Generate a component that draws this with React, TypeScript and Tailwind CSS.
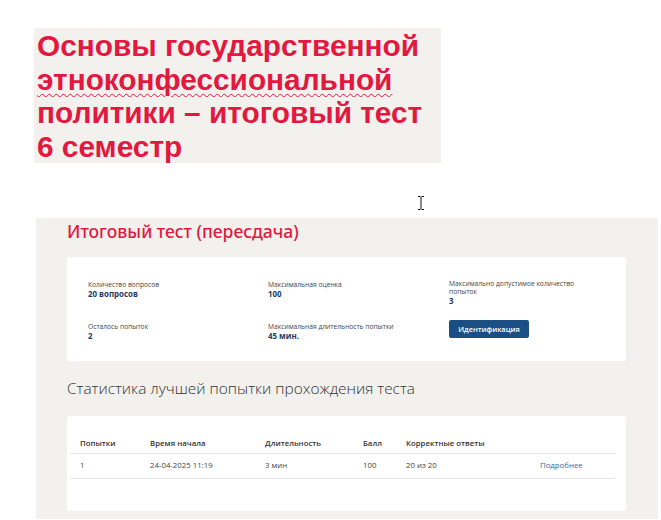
import React from "react";

export default function App() {
  return (
    <div className="relative w-[661px] h-[520px] bg-white overflow-hidden" style={{ fontFamily: '"Open Sans", "Noto Sans", sans-serif' }}>
      <div className="ml-[34px] mt-[28px] w-[407px] h-[135px] bg-[#f2f1ee] pl-[3px] pt-[1px]">
        <div className="text-[29.8px] leading-[33.5px] font-bold text-[#e3183f]" style={{ fontFamily: '"Liberation Sans", Arial, sans-serif' }}>
          <div>Основы государственной</div>
          <div><span className="underline decoration-wavy decoration-[#e3183f] decoration-1 underline-offset-[3px]">этноконфессиональной</span></div>
          <div>политики – итоговый тест</div>
          <div>6 семестр</div>
        </div>
      </div>

      <div className="absolute left-[416px] top-[195px]">
        <svg width="10" height="16" viewBox="0 0 10 16">
          <path d="M2 1.5h2.5M5.5 1.5h2.5M5 2v12M2 14.5h2.5M5.5 14.5h2.5" stroke="#111" strokeWidth="1" fill="none" />
        </svg>
      </div>

      <div className="ml-[36px] mt-[55px] w-[622px] h-[301px] bg-[#f2f1ee] pl-[31px] pr-[32px]">
        <div className="pt-[1px] text-[17.5px] leading-[24px] font-medium text-[#e3183f]" style={{ fontFamily: '"Noto Sans", sans-serif' }}>
          Итоговый тест (пересдача)
        </div>
        <div className="mt-[14px] bg-white rounded-[3px] h-[104px] pl-[21px] pt-[23px]">
          <div className="grid grid-cols-[180px_181px_160px]">
            <div>
              <div className="text-[6.7px] leading-[9px] text-[#444]">Количество вопросов</div>
              <div className="text-[7.9px] leading-[10px] font-bold text-[#1f3a60]">20 вопросов</div>
            </div>
            <div>
              <div className="text-[6.7px] leading-[9px] text-[#444]">Максимальная оценка</div>
              <div className="text-[7.9px] leading-[10px] font-bold text-[#1f3a60]">100</div>
            </div>
            <div>
              <div className="text-[6.7px] leading-[8px] text-[#444]">Максимально допустимое количество<br />попыток</div>
              <div className="text-[7.9px] leading-[10px] font-bold text-[#1f3a60]">3</div>
            </div>
            <div className="mt-[16px]">
              <div className="text-[6.7px] leading-[9px] text-[#444]">Осталось попыток</div>
              <div className="text-[7.9px] leading-[10px] font-bold text-[#1f3a60]">2</div>
            </div>
            <div className="mt-[16px]">
              <div className="text-[6.7px] leading-[9px] text-[#444]">Максимальная длительность попытки</div>
              <div className="text-[7.9px] leading-[10px] font-bold text-[#1f3a60]">45 мин.</div>
            </div>
            <div className="mt-[14px]">
              <div className="flex items-center justify-center w-[80px] h-[18px] rounded-[2px] bg-[#1b4f84] text-white text-[7.4px] leading-[10px] font-semibold">Идентификация</div>
            </div>
          </div>
        </div>
        <div className="mt-[17px] text-[15.4px] leading-[22px] font-light text-[#333]">
          Статистика лучшей попытки прохождения теста
        </div>
        <div className="mt-[16px] bg-white rounded-[3px] h-[95px] pt-[18px]">
          <div className="w-[545px] ml-[3px]">
            <div className="flex h-[20px] items-center border-b border-[#e6e6e6] text-[7.8px] font-semibold text-[#333] pl-[10px]">
              <div className="w-[70px]">Попытки</div>
              <div className="w-[115px]">Время начала</div>
              <div className="w-[98px]">Длительность</div>
              <div className="w-[43px]">Балл</div>
              <div className="w-[134px]">Корректные ответы</div>
            </div>
            <div className="flex h-[25px] items-center border-b border-[#e6e6e6] text-[7.8px] text-[#444] pl-[10px]">
              <div className="w-[70px]">1</div>
              <div className="w-[115px]">24-04-2025 11:19</div>
              <div className="w-[98px]">3 мин</div>
              <div className="w-[43px]">100</div>
              <div className="w-[134px]">20 из 20</div>
              <div className="text-[#2f6ea5]">Подробнее</div>
            </div>
          </div>
        </div>
      </div>
    </div>
  );
}
